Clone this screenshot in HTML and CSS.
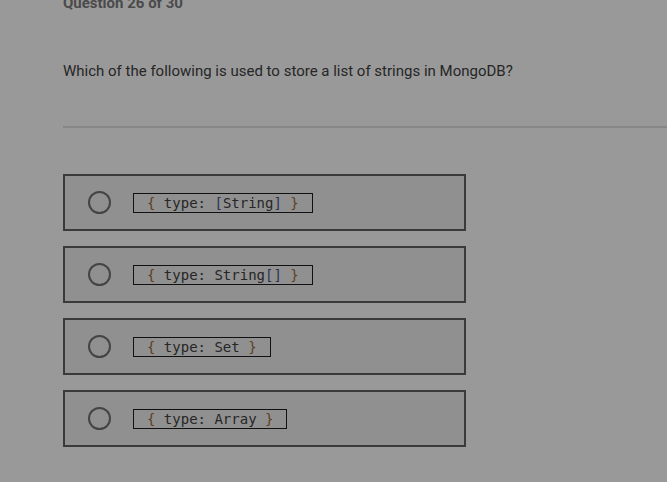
FILE: index.html
```html
<!DOCTYPE html>
<html>
<head>
<meta charset="utf-8">
<link rel="stylesheet" href="styles.css">
</head>
<body>
<div class="page">
  <div class="heading">Question 26 of 30</div>
  <div class="question">Which of the following is used to store a list of strings in MongoDB?</div>
  <hr class="divider">
  <div class="options">
    <div class="option"><span class="radio"></span><code class="code"><span class="br">{</span> type: <span class="sq">[</span>String<span class="sq">]</span> <span class="br">}</span></code></div>
    <div class="option"><span class="radio"></span><code class="code"><span class="br">{</span> type: String<span class="sq">[]</span> <span class="br">}</span></code></div>
    <div class="option"><span class="radio"></span><code class="code"><span class="br">{</span> type: Set <span class="br">}</span></code></div>
    <div class="option"><span class="radio"></span><code class="code"><span class="br">{</span> type: Array <span class="br">}</span></code></div>
  </div>
</div>
</body>
</html>
```
FILE: styles.css
```css
html, body {
  margin: 0;
  padding: 0;
  background: #999999;
  height: 100%;
  overflow: hidden;
}
.page {
  padding-left: 63px;
  margin-top: -7px;
  font-family: Roboto, "Liberation Sans", sans-serif;
}
.heading {
  font-size: 15px;
  font-weight: 700;
  color: #4a4a4a;
  line-height: 20px;
}
.question {
  margin-top: 48px;
  font-size: 15px;
  color: #262626;
  line-height: 20px;
}
.divider {
  margin: 45px 0 0 0;
  border: 0;
  height: 2px;
  background: #878787;
}
.options {
  margin-top: 46px;
  display: flex;
  flex-direction: column;
  gap: 15px;
  width: 403px;
}
.option {
  box-sizing: border-box;
  height: 57px;
  border: 2px solid #3a3a3a;
  background: #909090;
  display: flex;
  align-items: center;
  padding-left: 23px;
}
.radio {
  box-sizing: border-box;
  width: 23px;
  height: 23px;
  border: 2px solid #444444;
  border-radius: 50%;
  flex: none;
}
.code {
  margin-left: 22px;
  font-family: "DejaVu Sans Mono", "Liberation Mono", monospace;
  font-size: 14px;
  line-height: 18px;
  padding: 0 13px;
  border: 1px solid #111111;
  color: #262626;
}
.br { color: #5e3f20; }
.sq { color: #2a3550; }
```
